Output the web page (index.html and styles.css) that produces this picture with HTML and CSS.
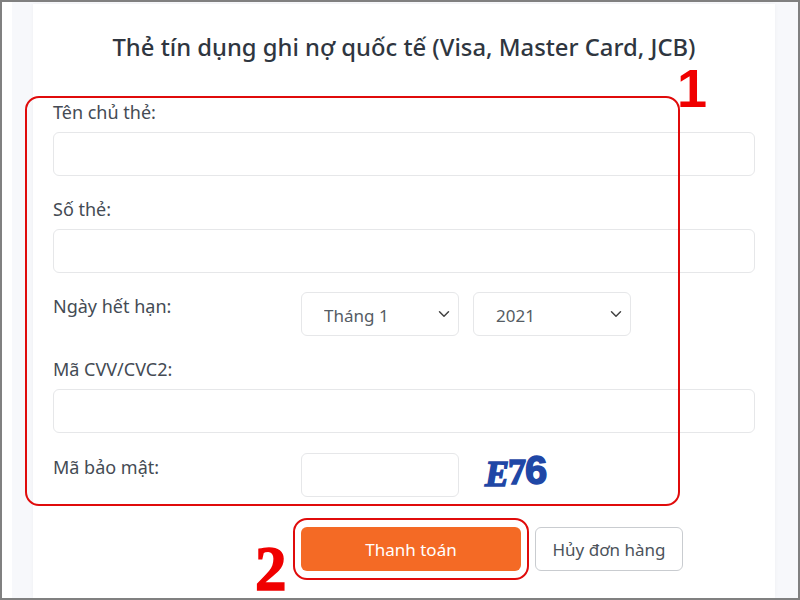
FILE: index.html
```html
<!DOCTYPE html>
<html lang="vi">
<head>
  <meta charset="UTF-8">
  <meta name="viewport" content="width=device-width, initial-scale=1.0">
  <title>Thanh toán</title>
  <link rel="stylesheet" href="styles.css">
</head>
<body>

<div class="page">
  <div class="card">
    <h2 class="title">Thẻ tín dụng ghi nợ quốc tế (Visa, Master Card, JCB)</h2>

    <div class="field">
      <label>Tên chủ thẻ:</label>
      <input type="text" class="input">
    </div>
    <div class="field">
      <label>Số thẻ:</label>
      <input type="text" class="input">
    </div>
    <div class="field field-inline">
      <label>Ngày hết hạn:</label>
      <div class="controls">
        <select class="input select"><option>Tháng 1</option></select>
        <select class="input select"><option>2021</option></select>
      </div>
    </div>
    <div class="field">
      <label>Mã CVV/CVC2:</label>
      <input type="text" class="input">
    </div>
    <div class="field field-inline field-captcha">
      <label>Mã bảo mật:</label>
      <div class="controls">
        <input type="text" class="input input-small">
        <span class="captcha"><span class="captcha-e">E</span>7<span class="captcha-six">6</span></span>
      </div>
    </div>

    <div class="actions">
      <button class="btn btn-pay">Thanh toán</button>
      <button class="btn btn-cancel">Hủy đơn hàng</button>
    </div>
  </div>
</div>

<!-- Chú thích màu đỏ -->
<div class="mark mark-form"></div>
<div class="mark mark-pay"></div>
<span class="step step-one">1</span>
<span class="step step-two">2</span>

</body>
</html>
```

FILE: styles.css
```css
* {
  box-sizing: border-box;
  font-family: "Noto Sans", Arial, sans-serif;
}
html, body {
  margin: 0;
  height: 600px;
}
body {
  position: relative;
  border: 2px solid #808080;
  background: white;
  overflow: hidden;
}
.page {
  height: 100%;
  margin-left: 10px;
  padding: 2px 23px 0 21px;
  background: #f7f8fb;
}
.card {
  height: 100%;
  padding: 23px 20px 0;
  background: white;
  box-shadow: 0 0 4px rgba(0,0,0,0.04);
}
.title {
  margin: 0 0 31px;
  height: 40px;
  text-align: center;
  color: #2f3640;
  font-size: 23.8px;
  font-weight: 500;
  line-height: 40px;
  white-space: nowrap;
}
.field {
  margin-bottom: 19px;
}
.field label {
  display: block;
  padding-top: 2px;
  margin-bottom: 8px;
  color: #444b54;
  font-size: 18px;
  line-height: 24px;
}
.field-inline {
  display: grid;
  grid-template-columns: 248px 1fr;
}
.controls {
  display: flex;
  align-items: center;
  gap: 14px;
}
.field-captcha {
  margin-top: 20px;
}
.input {
  display: block;
  width: 100%;
  height: 44px;
  padding: 0 22px;
  border: 1px solid #e6e7e9;
  border-radius: 6px;
  background: white;
  color: #555c64;
  font-size: 17px;
}
.select {
  width: 158px;
  padding-top: 2px;
  appearance: none;
  background-image: url("data:image/svg+xml,%3Csvg xmlns='http://www.w3.org/2000/svg' viewBox='0 0 16 16'%3E%3Cpath fill='none' stroke='%23444' stroke-width='2' stroke-linecap='round' stroke-linejoin='round' d='M2 5l6 6 6-6'/%3E%3C/svg%3E");
  background-repeat: no-repeat;
  background-position: right 7px center;
  background-size: 14px 12px;
}
.input-small {
  width: 158px;
}
.captcha {
  display: flex;
  align-items: center;
  margin: -6px 0 0 12px;
  color: #1f47a6;
  font-family: "Liberation Serif", serif;
  font-size: 36px;
  font-weight: bold;
  letter-spacing: -1px;
  -webkit-text-stroke: 1.5px #1f47a6;
  line-height: 44px;
}
.captcha-e {
  font-family: "Liberation Serif", serif;
  font-style: italic;
  margin-top: 4px;
}
.captcha-six {
  font-family: "Liberation Sans", sans-serif;
  font-size: 40px;
  margin-top: -4px;
}
.actions {
  display: flex;
  gap: 14px;
  margin: 30px 0 0 248px;
}
.btn {
  height: 44px;
  border-radius: 6px;
  font-size: 17px;
  cursor: pointer;
}
.btn-pay {
  width: 220px;
  border: none;
  background: #f46a25;
  color: white;
}
.btn-cancel {
  width: 148px;
  border: 1px solid #c9ccd0;
  background: white;
  color: #4c535b;
}

/* Chú thích màu đỏ */
.mark {
  position: absolute;
  border: 2px solid #e00b0b;
  border-radius: 14px;
}
.mark-form {
  left: 23px;
  top: 94px;
  width: 655px;
  height: 410px;
}
.mark-pay {
  left: 291px;
  top: 516px;
  width: 236px;
  height: 62px;
}
.step {
  position: absolute;
  color: #f00000;
  font-weight: bold;
}
.step-one {
  left: 675px;
  top: 54px;
  font-family: "Liberation Sans", sans-serif;
  font-size: 54px;
  line-height: 64px;
}
.step-two {
  left: 253px;
  top: 545px;
  font-family: "Liberation Serif", serif;
  font-size: 63px;
  line-height: 44px;
  -webkit-text-stroke: 1.5px #f00000;
}
```
